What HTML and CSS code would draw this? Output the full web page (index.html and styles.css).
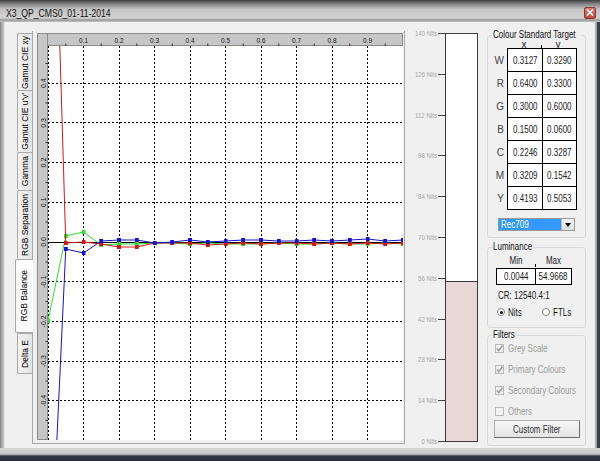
FILE: index.html
```html
<!DOCTYPE html>
<html>
<head>
<meta charset="utf-8">
<link rel="stylesheet" href="styles.css">
</head>
<body>
<div class="window">
  <div class="titlebar">
    <span class="title"><span class="nx t">X3_QP_CMS0_01-11-2014</span></span>
    <span class="close"><svg width="8" height="7" viewBox="0 0 8 7"><path d="M1 0.5 L7 6.5 M7 0.5 L1 6.5" stroke="#fff" stroke-width="1.6"/></svg></span>
  </div>
  <div class="frame">
    <div class="client">
      <div class="tabs">
        <div class="tab t1"><span>Gamut CIE xy</span></div>
        <div class="tab t2"><span>Gamut CIE u'v'</span></div>
        <div class="tab t3"><span>Gamma</span></div>
        <div class="tab t4"><span>RGB Separation</span></div>
        <div class="tab t5 sel"><span>RGB Balance</span></div>
        <div class="tab t6"><span>Delta E</span></div>
      </div>
      <div class="page">
        <svg class="chart" width="366" height="407" viewBox="0 0 366 407">
          <defs>
            <clipPath id="plotclip"><rect x="11" y="13" width="355" height="394"/></clipPath>
            <marker id="mr" markerUnits="userSpaceOnUse" markerWidth="4" markerHeight="4" refX="2" refY="2"><rect width="4" height="4" fill="#d01818"/></marker>
            <marker id="mg" markerUnits="userSpaceOnUse" markerWidth="4" markerHeight="4" refX="2" refY="2"><rect width="4" height="4" fill="#30dc30"/></marker>
            <marker id="mb" markerUnits="userSpaceOnUse" markerWidth="4" markerHeight="4" refX="2" refY="2"><rect width="4" height="4" fill="#1414c8"/></marker>
          </defs>
          <rect class="strip" x="0.5" y="0.5" width="365" height="12"/>
          <rect class="strip" x="0.5" y="0.5" width="10" height="406"/>
          <rect x="11" y="13" width="355" height="394" fill="#fff"/>
          <g class="ticks">
            <path d="M28.75 10.5v2.5 M64.25 10.5v2.5 M99.75 10.5v2.5 M135.25 10.5v2.5 M170.75 10.5v2.5 M206.25 10.5v2.5 M241.75 10.5v2.5 M277.25 10.5v2.5 M312.75 10.5v2.5 M348.25 10.5v2.5"/>
            <path d="M8.5 30.5h2.5 M8.5 70h2.5 M8.5 109.5h2.5 M8.5 149.5h2.5 M8.5 189h2.5 M8.5 229h2.5 M8.5 268.5h2.5 M8.5 308.5h2.5 M8.5 348h2.5 M8.5 387.5h2.5"/>
          </g>
          <g class="toplab">
            <text x="46.5" y="9.5" textLength="9" lengthAdjust="spacingAndGlyphs">0.1</text>
            <text x="82" y="9.5" textLength="9" lengthAdjust="spacingAndGlyphs">0.2</text>
            <text x="117.5" y="9.5" textLength="9" lengthAdjust="spacingAndGlyphs">0.3</text>
            <text x="153" y="9.5" textLength="9" lengthAdjust="spacingAndGlyphs">0.4</text>
            <text x="188.5" y="9.5" textLength="9" lengthAdjust="spacingAndGlyphs">0.5</text>
            <text x="224" y="9.5" textLength="9" lengthAdjust="spacingAndGlyphs">0.6</text>
            <text x="259.5" y="9.5" textLength="9" lengthAdjust="spacingAndGlyphs">0.7</text>
            <text x="295" y="9.5" textLength="9" lengthAdjust="spacingAndGlyphs">0.8</text>
            <text x="330.5" y="9.5" textLength="9" lengthAdjust="spacingAndGlyphs">0.9</text>
          </g>
          <g class="leftlab">
            <text transform="translate(8.5 50.2) rotate(-90)">0.4</text>
            <text transform="translate(8.5 89.9) rotate(-90)">0.3</text>
            <text transform="translate(8.5 129.6) rotate(-90)">0.2</text>
            <text transform="translate(8.5 169.3) rotate(-90)">0.1</text>
            <text transform="translate(8.5 209) rotate(-90)">0.0</text>
            <text transform="translate(8.5 248.7) rotate(-90)">-0.1</text>
            <text transform="translate(8.5 288.4) rotate(-90)">-0.2</text>
            <text transform="translate(8.5 328.1) rotate(-90)">-0.3</text>
            <text transform="translate(8.5 367.8) rotate(-90)">-0.4</text>
          </g>
          <g class="grid">
            <path d="M11.5 13V407 M46.5 13V407 M82.5 13V407 M117.5 13V407 M153.5 13V407 M188.5 13V407 M224.5 13V407 M259.5 13V407 M295.5 13V407 M330.5 13V407"/>
            <path d="M11 50.5H366 M11 89.5H366 M11 129.5H366 M11 169.5H366 M11 248.5H366 M11 288.5H366 M11 328.5H366 M11 367.5H366"/>
          </g>
          <path class="zero" d="M11 209.5H366"/>
          <g clip-path="url(#plotclip)">
            <polyline class="sg" points="11,288 28.75,203 46.5,199 64.25,212 82,211 99.75,211 117.5,210 135.25,210 153,211 170.75,210 188.5,211 206.25,211 224,211 241.75,210 259.5,211 277.25,211 295,210 312.75,211 330.5,211 348.25,210 366,211"/>
            <polyline class="sr" points="11,-381 28.75,210 46.5,209 64.25,211 82,214 99.75,214 117.5,210 135.25,210 153,210 170.75,212 188.5,211 206.25,210 224,211 241.75,210 259.5,210 277.25,211 295,210 312.75,211 330.5,210 348.25,211 366,210"/>
            <polyline class="sb" points="11,598 28.75,216 46.5,220 64.25,208 82,207 99.75,207 117.5,210 135.25,209 153,207 170.75,209 188.5,208 206.25,207 224,207 241.75,208 259.5,208 277.25,207 295,208 312.75,207 330.5,206 348.25,208 366,207"/>
          </g>
        </svg>
      </div>
      <svg class="meter" width="77" height="426" viewBox="0 0 77 426">
        <rect x="40.5" y="11.5" width="32" height="408" fill="#fff" stroke="#3a3a3a"/>
        <rect x="40.5" y="259.5" width="32" height="160" fill="#e9d7d7" stroke="#3a3a3a"/>
        <path class="mtick" d="M33 11.5h7 M33 52.5h7 M33 93.5h7 M33 133.5h7 M33 174.5h7 M33 215.5h7 M33 256.5h7 M33 297.5h7 M33 337.5h7 M33 378.5h7 M33 419.5h7"/>
        <g class="mlab">
          <text x="32" y="14" textLength="22" lengthAdjust="spacingAndGlyphs">140 Nits</text>
          <text x="32" y="55" textLength="22" lengthAdjust="spacingAndGlyphs">126 Nits</text>
          <text x="32" y="96" textLength="22" lengthAdjust="spacingAndGlyphs">112 Nits</text>
          <text x="32" y="136" textLength="19" lengthAdjust="spacingAndGlyphs">98 Nits</text>
          <text x="32" y="177" textLength="19" lengthAdjust="spacingAndGlyphs">84 Nits</text>
          <text x="32" y="218" textLength="19" lengthAdjust="spacingAndGlyphs">70 Nits</text>
          <text x="32" y="259" textLength="19" lengthAdjust="spacingAndGlyphs">56 Nits</text>
          <text x="32" y="300" textLength="19" lengthAdjust="spacingAndGlyphs">42 Nits</text>
          <text x="32" y="340" textLength="19" lengthAdjust="spacingAndGlyphs">28 Nits</text>
          <text x="32" y="381" textLength="19" lengthAdjust="spacingAndGlyphs">14 Nits</text>
          <text x="32" y="422" textLength="15.5" lengthAdjust="spacingAndGlyphs">0 Nits</text>
        </g>
      </svg>
      <div class="side">
        <fieldset class="grp cst">
          <legend class="lg1"><span class="nx">Colour Standard Target</span></legend>
          <div class="xyhead"><span>x</span><span class="sep">y</span></div>
          <div class="tbl">
            <div class="lbls"><span>W</span><span>R</span><span>G</span><span>B</span><span>C</span><span>M</span><span>Y</span></div>
            <div class="cells">
              <span><i class="nc">0.3127</i></span><span><i class="nc">0.3290</i></span>
              <span><i class="nc">0.6400</i></span><span><i class="nc">0.3300</i></span>
              <span><i class="nc">0.3000</i></span><span><i class="nc">0.6000</i></span>
              <span><i class="nc">0.1500</i></span><span><i class="nc">0.0600</i></span>
              <span><i class="nc">0.2246</i></span><span><i class="nc">0.3287</i></span>
              <span><i class="nc">0.3209</i></span><span><i class="nc">0.1542</i></span>
              <span><i class="nc">0.4193</i></span><span><i class="nc">0.5053</i></span>
            </div>
          </div>
          <div class="combo"><span class="val"><i class="nx">Rec709</i></span><span class="btn"><i class="tri"></i></span></div>
        </fieldset>
        <fieldset class="grp lum">
          <legend class="lg2"><span class="nx">Luminance</span></legend>
          <div class="mmhead"><span><i class="nc">Min</i></span><span class="sep"><i class="nc">Max</i></span></div>
          <div class="mmbox"><span><i class="nc">0.0044</i></span><span><i class="nc">54.9668</i></span></div>
          <div class="cr"><span class="nx">CR: 12540.4:1</span></div>
          <div class="radios">
            <span class="radio on"></span><span class="rlab"><i class="nx">Nits</i></span>
            <span class="radio r2"></span><span class="rlab"><i class="nx">FTLs</i></span>
          </div>
        </fieldset>
        <fieldset class="grp filt">
          <legend class="lg3"><span class="nx">Filters</span></legend>
          <div class="chk first"><span class="box"><svg width="7" height="7" viewBox="0 0 7 7"><path d="M0.8 3.4 L2.8 5.6 L6.4 0.8" fill="none" stroke="#9a9a9a" stroke-width="1.5"/></svg></span><span class="nx">Grey Scale</span></div>
          <div class="chk"><span class="box"><svg width="7" height="7" viewBox="0 0 7 7"><path d="M0.8 3.4 L2.8 5.6 L6.4 0.8" fill="none" stroke="#9a9a9a" stroke-width="1.5"/></svg></span><span class="nx">Primary Colours</span></div>
          <div class="chk"><span class="box"><svg width="7" height="7" viewBox="0 0 7 7"><path d="M0.8 3.4 L2.8 5.6 L6.4 0.8" fill="none" stroke="#9a9a9a" stroke-width="1.5"/></svg></span><span class="nx">Secondary Colours</span></div>
          <div class="chk"><span class="box"></span><span class="nx">Others</span></div>
          <div class="button"><span class="nc">Custom Filter</span></div>
        </fieldset>
      </div>
    </div>
  </div>
  <div class="bottom"></div>
</div>
</body>
</html>
```
FILE: styles.css
```css
* { box-sizing: border-box; }
body {
  margin: 0;
  background: #000;
  font-family: "Liberation Sans", Arial, sans-serif;
}
i { font-style: normal; }
.nx, .nc {
  display: inline-block;
  white-space: nowrap;
  transform: scaleX(0.8);
}
.nx { transform-origin: 0 50%; }
.nc { transform-origin: 50% 50%; }
.window {
  width: 600px;
  height: 461px;
  display: flex;
  flex-direction: column;
  overflow: hidden;
  background: #f0f0f0;
}
.titlebar {
  height: 22px;
  flex: none;
  display: flex;
  align-items: center;
  justify-content: space-between;
  padding: 3px 4px 0 6px;
  background: linear-gradient(to bottom, #3c3c3c 0, #767676 3px, #c2c2c2 9px, #d2d2d2 18px, #9a9a9a 20px, #c4c4c4 22px);
}
.title {
  font-size: 10.5px;
  line-height: 12px;
  color: #111;
}
.nx.t { transform: scaleX(0.82); }
.close {
  width: 12px;
  height: 12px;
  display: flex;
  align-items: center;
  justify-content: center;
  background: linear-gradient(#dc7a72, #c2463c);
  border: 1px solid #8a3a34;
  border-radius: 2px;
}
.frame {
  flex: 1;
  display: flex;
  padding: 0 5px;
  background: linear-gradient(to right, #858585 0, #a9a9a9 2px, #d0d0d0 4px, #f0f0f0 5px, #f0f0f0 595px, #b4b4b4 595px, #a0a0a0 597px, #3a4048 597px);
}
.client {
  flex: 1;
  display: flex;
  background: #f0f0f0;
}
.bottom {
  height: 13px;
  flex: none;
  background: linear-gradient(to bottom, #d6d6d6 0, #c4c4c4 6px, #8c8c8c 7px, #2e3642 8px, #26303c 13px);
}

/* vertical tabs */
.tabs {
  width: 27px;
  flex: none;
  padding-top: 11px;
  display: flex;
  flex-direction: column;
  align-items: flex-end;
}
.tab {
  width: 15px;
  display: flex;
  align-items: center;
  justify-content: center;
  border: 1px solid #a9a9a9;
  border-right: 0;
  border-bottom: 0;
  border-radius: 2px 0 0 2px;
  background: linear-gradient(to right, #f4f4f4, #e4e4e4);
}
.tab span {
  writing-mode: vertical-rl;
  transform: rotate(180deg);
  font-size: 8.5px;
  line-height: 1;
  white-space: nowrap;
  color: #000;
}
.t1 { height: 57px; }
.t2 { height: 62px; }
.t3 { height: 38px; }
.t4 { height: 69px; }
.t5 { height: 74px; }
.t6 { height: 41px; border-bottom: 1px solid #a9a9a9; }
.tab.sel {
  width: 18px;
  margin-right: -1px;
  position: relative;
  z-index: 1;
  background: #fcfcfc;
  border-bottom: 1px solid #a9a9a9;
}

/* chart page */
.page {
  width: 373px;
  height: 413px;
  margin-top: 9px;
  flex: none;
  border: 1px solid #a9a9a9;
  border-top: 0;
  padding: 2px 1px 3px 4px;
}
.chart { display: block; }
.strip { fill: #c6c6c6; stroke: #8c8c8c; stroke-width: 1; }
.ticks path { stroke: #333; stroke-width: 1; fill: none; }
.toplab text {
  font-family: "Liberation Sans", sans-serif;
  font-size: 8px;
  text-anchor: middle;
  fill: #111;
}
.leftlab text {
  font-family: "Liberation Sans", sans-serif;
  font-size: 7px;
  text-anchor: middle;
  fill: #111;
}
.grid path { stroke: #000; stroke-width: 1; stroke-dasharray: 2 2; fill: none; }
.zero { stroke: #000; stroke-width: 1; }
.sr, .sg, .sb { fill: none; stroke-width: 1; }
.sr { stroke: #d01818; marker-start: url(#mr); marker-mid: url(#mr); marker-end: url(#mr); }
.sg { stroke: #30dc30; marker-start: url(#mg); marker-mid: url(#mg); marker-end: url(#mg); }
.sb { stroke: #1414c8; marker-start: url(#mb); marker-mid: url(#mb); marker-end: url(#mb); }

/* meter */
.meter { display: block; flex: none; }
.mtick { stroke: #444; stroke-width: 1; }
.mlab text {
  font-family: "Liberation Sans", sans-serif;
  font-size: 7.5px;
  text-anchor: end;
  fill: #a6a6a6;
}

/* side panel */
.side {
  width: 113px;
  flex: none;
  padding: 0 9px 0 5px;
  font-size: 10px;
  color: #1a1a1a;
}
.grp {
  margin: 0;
  padding: 0;
  min-width: 0;
  border: 1px solid #d3d9dd;
  border-radius: 3px;
}
.grp legend {
  padding: 0 1px;
  margin-left: 4px;
  font-size: 10px;
  line-height: 12px;
  color: #111;
  white-space: nowrap;
  overflow: visible;
}
.lg1 { width: 90px; }
.lg2 { width: 41px; }
.lg3 { width: 24px; }
.cst { margin-top: 7px; padding-bottom: 6px; }
.xyhead {
  display: flex;
  height: 7px;
  line-height: 7px;
  margin-left: 19px;
}
.xyhead span, .mmhead span { text-align: center; }
.xyhead span { width: 34px; }
.xyhead .sep, .mmhead .sep {
  background: linear-gradient(#000, #000) no-repeat left bottom / 1px 3px;
}
.tbl { display: flex; }
.lbls {
  width: 19px;
  display: grid;
  grid-template-rows: repeat(7, 22px);
  row-gap: 1px;
  padding-top: 1px;
}
.lbls span {
  display: flex;
  align-items: center;
  justify-content: flex-end;
  padding-right: 3px;
  color: #444;
}
.cells {
  display: grid;
  grid-template-columns: 34px 33px;
  grid-template-rows: repeat(7, 22px);
  gap: 1px;
  padding: 1px;
  background: #000;
}
.cells span {
  background: #fff;
  display: flex;
  align-items: center;
  justify-content: center;
  color: #222;
}
.combo {
  display: flex;
  width: 77px;
  height: 13px;
  margin: 8px 0 0 10px;
  border: 1px solid #9a9a9a;
  background: #fff;
}
.combo .val {
  flex: 1;
  background: #3399ff;
  color: #fff;
  line-height: 11px;
  padding-left: 2px;
}
.combo .btn {
  width: 13px;
  display: flex;
  align-items: center;
  justify-content: center;
  border-left: 1px solid #b8b8b8;
  background: linear-gradient(#f6f6f6, #dedede);
}
.tri {
  width: 0;
  height: 0;
  border-left: 3px solid transparent;
  border-right: 3px solid transparent;
  border-top: 4px solid #000;
}
.lum { margin-top: 3px; padding-bottom: 9px; }
.mmhead {
  display: flex;
  margin: 2px 0 0 9px;
  line-height: 12px;
}
.mmhead span:first-child { width: 38px; }
.mmhead span.sep { width: 36px; }
.mmbox {
  display: grid;
  grid-template-columns: 38px 35px;
  grid-template-rows: 15px;
  gap: 1px;
  padding: 1px;
  width: 76px;
  margin: 1px 0 0 8px;
  background: #000;
}
.mmbox span {
  background: #fff;
  display: flex;
  align-items: center;
  justify-content: center;
}
.cr {
  margin: 5px 0 0 10px;
  line-height: 12px;
}
.radios {
  display: flex;
  align-items: center;
  height: 12px;
  margin: 4px 0 0 9px;
}
.radio {
  width: 8px;
  height: 8px;
  flex: none;
  border-radius: 50%;
  border: 1px solid #8a8a8a;
  background: #fff;
  display: flex;
  align-items: center;
  justify-content: center;
}
.radio.on::after {
  content: "";
  width: 3px;
  height: 3px;
  border-radius: 50%;
  background: #111;
}
.rlab { margin-left: 3px; width: 22px; }
.radio.r2 { margin-left: 12px; }
.filt { margin-top: 1px; padding-bottom: 7px; }
.chk {
  display: flex;
  align-items: center;
  height: 12px;
  margin: 9px 0 0 7px;
  color: #9c9c9c;
}
.chk.first { margin-top: 1px; }
.chk .box {
  width: 9px;
  height: 9px;
  flex: none;
  margin-right: 4px;
  border: 1px solid #b8b8b8;
  background: #f2f2f2;
  display: flex;
  align-items: center;
  justify-content: center;
}
.chk .box svg { display: block; }
.button {
  width: 86px;
  height: 18px;
  margin: 3px 0 0 6px;
  border: 1px solid #b0b0b0;
  border-right-color: #6e6e6e;
  border-bottom-color: #6e6e6e;
  background: linear-gradient(#f6f6f6, #e4e4e4);
  display: flex;
  align-items: center;
  justify-content: center;
  color: #333;
}
```
